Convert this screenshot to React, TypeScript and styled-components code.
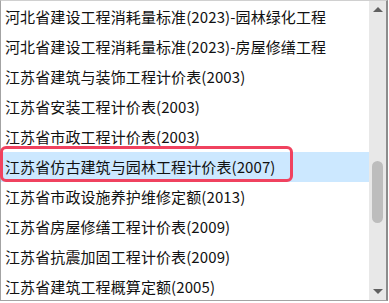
import React from 'react';
import styled, { createGlobalStyle } from 'styled-components';

const GlobalStyle = createGlobalStyle`
  html, body {
    margin: 0;
    padding: 0;
    background: #ffffff;
  }
  body {
    font-family: "Noto Sans CJK SC", "Noto Sans", sans-serif;
  }
`;

const Frame = styled.div`
  position: relative;
  width: 389px;
  height: 303px;
  background: #ffffff;
`;

const ListBox = styled.div`
  display: flex;
  width: 388px;
  height: 301px;
  box-sizing: border-box;
  border: 1px solid #a3a3a3;
  border-top-color: #d0d0d0;
  border-right: 2px solid #8c8c8c;
  background: #ffffff;
`;

const Items = styled.ul`
  flex: 1;
  list-style: none;
  margin: 0;
  padding: 1px 0 0;
  overflow: hidden;
`;

const Item = styled.li<{ $selected?: boolean }>`
  height: 30px;
  line-height: 30px;
  padding-left: 4px;
  font-size: 15px;
  letter-spacing: 0.1px;
  color: #111111;
  white-space: nowrap;
  background: ${(p) => (p.$selected ? '#cce8ff' : 'transparent')};
`;

const ScrollBar = styled.div`
  display: flex;
  flex-direction: column;
  width: 17px;
  background: #e8e8e8;
`;

const ArrowButton = styled.div`
  display: flex;
  align-items: center;
  justify-content: center;
  height: 17px;
`;

const Track = styled.div`
  flex: 1;
`;

const Thumb = styled.div<{ $top: number; $height: number }>`
  margin-top: ${(p) => p.$top}px;
  margin-left: 3px;
  width: 11px;
  height: ${(p) => p.$height}px;
  border-radius: 6px;
  background: #bdbdbd;
`;

const Highlight = styled.div`
  position: absolute;
  left: 0;
  top: 146px;
  width: 293px;
  height: 36px;
  box-sizing: border-box;
  border: 3px solid #f0425f;
  border-radius: 6px;
  pointer-events: none;
`;

const Arrow = ({ up }: { up?: boolean }) => (
  <svg width="10" height="6" viewBox="0 0 10 6">
    <polygon points={up ? '0,5 5,0 10,5' : '0,0 10,0 5,5'} fill="#606060" />
  </svg>
);

const items = [
  '河北省建设工程消耗量标准(2023)-园林绿化工程',
  '河北省建设工程消耗量标准(2023)-房屋修缮工程',
  '江苏省建筑与装饰工程计价表(2003)',
  '江苏省安装工程计价表(2003)',
  '江苏省市政工程计价表(2003)',
  '江苏省仿古建筑与园林工程计价表(2007)',
  '江苏省市政设施养护维修定额(2013)',
  '江苏省房屋修缮工程计价表(2009)',
  '江苏省抗震加固工程计价表(2009)',
  '江苏省建筑工程概算定额(2005)',
];

const selectedIndex = 5;

export default function App() {
  return (
    <Frame>
      <GlobalStyle />
      <ListBox>
        <Items>
          {items.map((item, index) => (
            <Item key={index} $selected={index === selectedIndex}>
              {item}
            </Item>
          ))}
        </Items>
        <ScrollBar>
          <ArrowButton>
            <Arrow up />
          </ArrowButton>
          <Track>
            <Thumb $top={143} $height={62} />
          </Track>
          <ArrowButton>
            <Arrow />
          </ArrowButton>
        </ScrollBar>
      </ListBox>
      <Highlight />
    </Frame>
  );
}
